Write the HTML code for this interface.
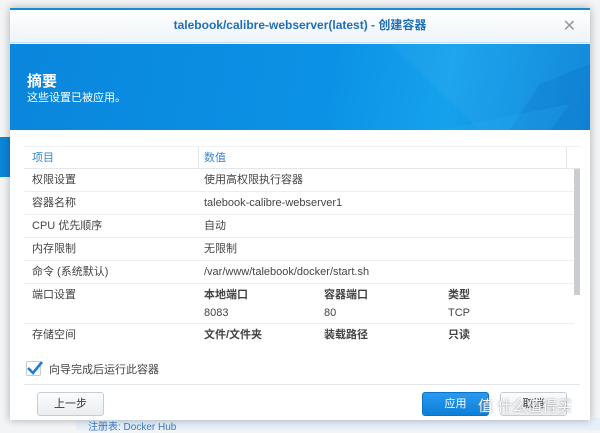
<!DOCTYPE html>
<html><head><meta charset="utf-8"><style>
*{margin:0;padding:0;box-sizing:border-box}
body{width:600px;height:430px;overflow:hidden;background:#f2f4f6;font-family:"Liberation Sans","Noto Sans CJK SC",sans-serif;font-size:11px;color:#444;position:relative}
.abs{position:absolute}
.dlg{left:10px;top:8px;width:580px;height:412px;background:#fff;box-shadow:0 0 8px rgba(0,0,0,.3);border-top:2px solid #1a8ad8}
.title{left:0;top:0;width:580px;height:33px;background:linear-gradient(#fff,#eef4f9);text-align:center;line-height:31px;color:#1f6fb8;font-size:12px;font-weight:bold;border-bottom:1px solid #bfe3f8}
.banner{left:0;top:34px;width:580px;height:86px;background:linear-gradient(100deg,#0a86dc 0%,#0b92e6 55%,#15a2ec 75%,#0a84d8 100%);overflow:hidden}
.row{left:14px;width:550px;height:23px;border-bottom:1px solid #eceef0;line-height:22px}
.row span{position:absolute;left:8px}
.row b{position:absolute;left:180px;font-weight:normal}
.btn{height:24px;border:1px solid #c7ccd2;border-radius:3px;background:linear-gradient(#fbfcfd,#eaedf0);text-align:center;line-height:22px;color:#333}
</style></head><body>
<div class="abs" style="left:0;top:137px;width:10px;height:40px;background:#0b86d9"></div>
<div class="abs" style="left:76px;top:418px;width:524px;height:12px;background:#e6f0fa"></div>
<div class="abs" style="left:88px;top:418px;color:#3a7bc8;font-size:10px">注册表: Docker Hub</div>
<div class="abs dlg">
 <div class="abs title">talebook/calibre-webserver(latest) - 创建容器</div>
 <div class="abs" style="right:14px;top:6px;color:#999;font-size:16px">✕</div>
 <div class="abs banner">
  <svg class="abs" style="left:0;top:0" width="580" height="86"><polygon points="380,0 580,0 580,86 470,86" fill="#fff" opacity=".04"/><polygon points="530,40 580,20 580,86 500,86" fill="#0563b8" opacity=".2"/><polygon points="430,86 560,60 540,86" fill="#2fb6f5" opacity=".2"/></svg>
  <div class="abs" style="left:17px;top:26px;color:#fff;font-size:15px;font-weight:bold">摘要</div>
  <div class="abs" style="left:17px;top:45px;color:#fff;font-size:11px">这些设置已被应用。</div>
 </div>
 <div class="abs" style="left:14px;top:136px;width:556px;height:23px;border-bottom:1px solid #e3e6e9;border-top:1px solid #f0f1f2;line-height:22px;color:#3a86d0">
  <span class="abs" style="left:8px">项目</span><span class="abs" style="left:180px">数值</span>
  <div class="abs" style="left:174px;top:0;width:1px;height:22px;background:#e3e6e9"></div>
  <div class="abs" style="left:542px;top:0;width:1px;height:22px;background:#e3e6e9"></div>
 </div>
 <div class="abs row" style="top:159px"><span>权限设置</span><b>使用高权限执行容器</b></div>
 <div class="abs row" style="top:182px"><span>容器名称</span><b>talebook-calibre-webserver1</b></div>
 <div class="abs row" style="top:205px"><span>CPU 优先顺序</span><b>自动</b></div>
 <div class="abs row" style="top:228px"><span>内存限制</span><b>无限制</b></div>
 <div class="abs row" style="top:251px"><span>命令 (系统默认)</span><b>/var/www/talebook/docker/start.sh</b></div>
 <div class="abs row" style="top:274px;height:40px"><span>端口设置</span>
  <b style="font-weight:bold;top:0">本地端口</b><b style="left:300px;font-weight:bold">容器端口</b><b style="left:424px;font-weight:bold">类型</b>
  <b style="top:18px">8083</b><b style="top:18px;left:300px">80</b><b style="top:18px;left:424px">TCP</b></div>
 <div class="abs row" style="top:314px;border:none"><span>存储空间</span><b style="font-weight:bold">文件/文件夹</b><b style="left:300px;font-weight:bold">装载路径</b><b style="left:424px;font-weight:bold">只读</b></div>
 <div class="abs" style="left:564px;top:159px;width:6px;height:126px;background:#c9cdd1"></div>
 <div class="abs" style="left:16px;top:351px;width:15px;height:15px;border:1px solid #c7ccd2;border-radius:2px;background:#fff"></div>
 <svg class="abs" style="left:15px;top:349px" width="20" height="18"><path d="M3 9 L8 14 L17 3" stroke="#1a7fd4" stroke-width="2.6" fill="none"/></svg>
 <div class="abs" style="left:39px;top:351px">向导完成后运行此容器</div>
 <div class="abs" style="left:14px;top:374px;width:556px;height:1px;background:#e3e6e9"></div>
 <div class="abs btn" style="left:27px;top:382px;width:67px">上一步</div>
 <div class="abs btn" style="left:412px;top:382px;width:67px;background:linear-gradient(#2a9af0,#0b7fd8);border-color:#0b74c8;color:#fff">应用</div>
 <div class="abs btn" style="left:490px;top:382px;width:67px">取消</div>
</div>
<div class="abs" style="left:478px;top:395px;color:rgba(255,255,255,.9);font-size:15px;text-shadow:0 0 2px #888">值 什么值得买</div>
</body></html>
